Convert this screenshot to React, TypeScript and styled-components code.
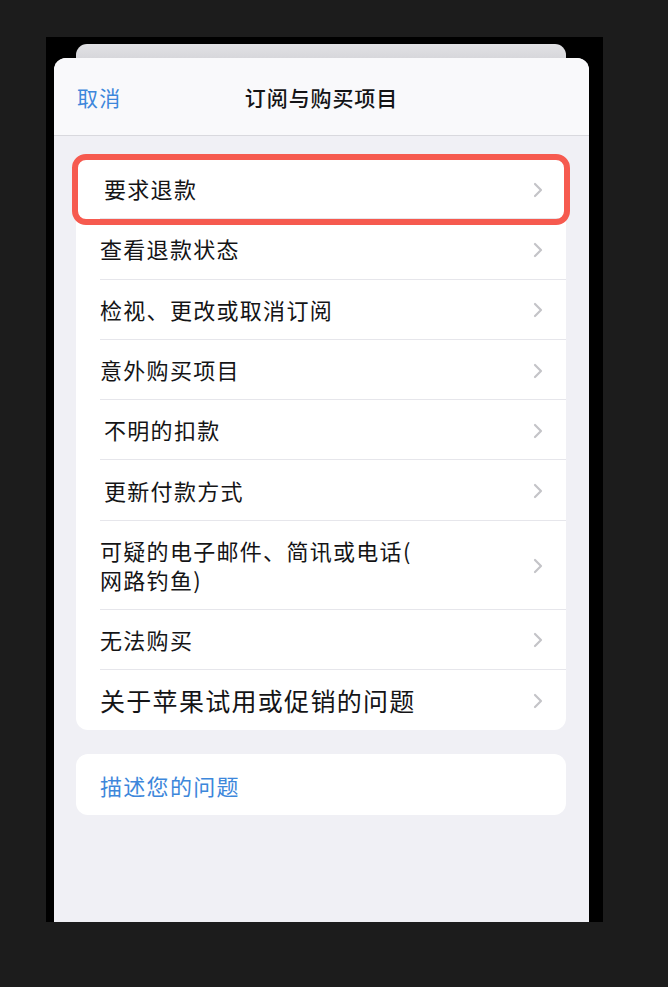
import React from "react";
import styled, { createGlobalStyle } from "styled-components";

const GlobalStyle = createGlobalStyle`
  html, body {
    margin: 0;
    padding: 0;
    background: #1c1c1c;
  }
  body {
    font-family: "Noto Sans CJK SC", "Noto Sans", sans-serif;
    -webkit-font-smoothing: antialiased;
  }
`;

const Page = styled.div`
  min-height: 987px;
  padding: 37px 0 0 46px;
  box-sizing: border-box;
  background: #1c1c1c;
`;

const Frame = styled.div`
  width: 557px;
  height: 885px;
  background: #000;
  padding: 7px 14px 0 8px;
  box-sizing: border-box;
  display: flex;
  flex-direction: column;
`;

const BackCard = styled.div`
  height: 14px;
  margin: 0 23px 0 22px;
  border-radius: 11px 11px 0 0;
  background: linear-gradient(#e2e2e5, #d7d7db);
`;

const Sheet = styled.div`
  flex: 1;
  display: flex;
  flex-direction: column;
  border-radius: 12px 12px 0 0;
  overflow: hidden;
  background: #f0f0f5;
`;

const Header = styled.header`
  height: 78px;
  box-sizing: border-box;
  display: grid;
  grid-template-columns: 1fr auto 1fr;
  align-items: center;
  padding: 0 23px;
  background: #f9f9fb;
  border-bottom: 1px solid #d9d9de;
`;

const Cancel = styled.span`
  font-size: 21px;
  letter-spacing: 1.3px;
  color: #3d87db;
  justify-self: start;
`;

const Title = styled.h1`
  margin: 0;
  font-size: 21px;
  font-weight: 500;
  letter-spacing: 0.9px;
  color: #141416;
`;

const Body = styled.main`
  display: flex;
  flex-direction: column;
  gap: 24px;
  padding: 23px 23px 0 22px;
`;

const Card = styled.section`
  background: #fff;
  border-radius: 12px;
  display: flex;
  flex-direction: column;
`;

const Row = styled.div`
  position: relative;
  display: flex;
  padding-left: 24px;
`;

const RowInner = styled.div<{ $last?: boolean; $tall?: boolean }>`
  flex: 1;
  display: flex;
  align-items: center;
  justify-content: space-between;
  min-height: ${(p) => (p.$tall ? "89px" : "60.3px")};
  box-sizing: border-box;
  padding-right: 23px;
  border-bottom: ${(p) => (p.$last ? "none" : "1px solid #e6e6eb")};
`;

const Label = styled.span<{ $indent?: number; $size?: number }>`
  margin-left: ${(p) => p.$indent ?? 0}px;
  font-size: ${(p) => p.$size ?? 22}px;
  letter-spacing: 1.3px;
  line-height: 29px;
  color: #141416;
`;

const Highlight = styled.div`
  position: absolute;
  top: -5px;
  bottom: -6px;
  left: -4px;
  right: -4px;
  border: 6px solid #f65a4f;
  border-radius: 14px;
  pointer-events: none;
`;

const Chevron = styled.svg`
  flex: none;
  width: 10px;
  height: 16px;
  margin-top: 2px;
`;

const DescribeRow = styled.div`
  height: 61px;
  display: flex;
  align-items: center;
  padding-left: 24px;
`;

const LinkText = styled.span`
  font-size: 22px;
  letter-spacing: 1.3px;
  color: #3d87db;
`;

const ChevronIcon = () => (
  <Chevron viewBox="0 0 10 16">
    <path
      d="M2 2 L8 8 L2 14"
      fill="none"
      stroke="#c4c4c8"
      strokeWidth="2.2"
      strokeLinecap="round"
      strokeLinejoin="round"
    />
  </Chevron>
);

type Item = {
  label: React.ReactNode;
  indent?: number;
  size?: number;
  tall?: boolean;
  highlight?: boolean;
};

const items: Item[] = [
  { label: "要求退款", indent: 4, highlight: true },
  { label: "查看退款状态" },
  { label: "检视、更改或取消订阅" },
  { label: "意外购买项目" },
  { label: "不明的扣款", indent: 4 },
  { label: "更新付款方式", indent: 4 },
  {
    label: (
      <>
        可疑的电子邮件、简讯或电话(
        <br />
        网路钓鱼)
      </>
    ),
    tall: true,
  },
  { label: "无法购买" },
  { label: "关于苹果试用或促销的问题", size: 25 },
];

export default function App() {
  return (
    <>
      <GlobalStyle />
      <Page>
        <Frame>
          <BackCard />
          <Sheet>
            <Header>
              <Cancel>取消</Cancel>
              <Title>订阅与购买项目</Title>
              <span />
            </Header>
            <Body>
              <Card>
                {items.map((it, i) => (
                  <Row key={i}>
                    <RowInner $last={i === items.length - 1} $tall={it.tall}>
                      <Label $indent={it.indent} $size={it.size}>
                        {it.label}
                      </Label>
                      <ChevronIcon />
                    </RowInner>
                    {it.highlight && <Highlight />}
                  </Row>
                ))}
              </Card>
              <Card>
                <DescribeRow>
                  <LinkText>描述您的问题</LinkText>
                </DescribeRow>
              </Card>
            </Body>
          </Sheet>
        </Frame>
      </Page>
    </>
  );
}
